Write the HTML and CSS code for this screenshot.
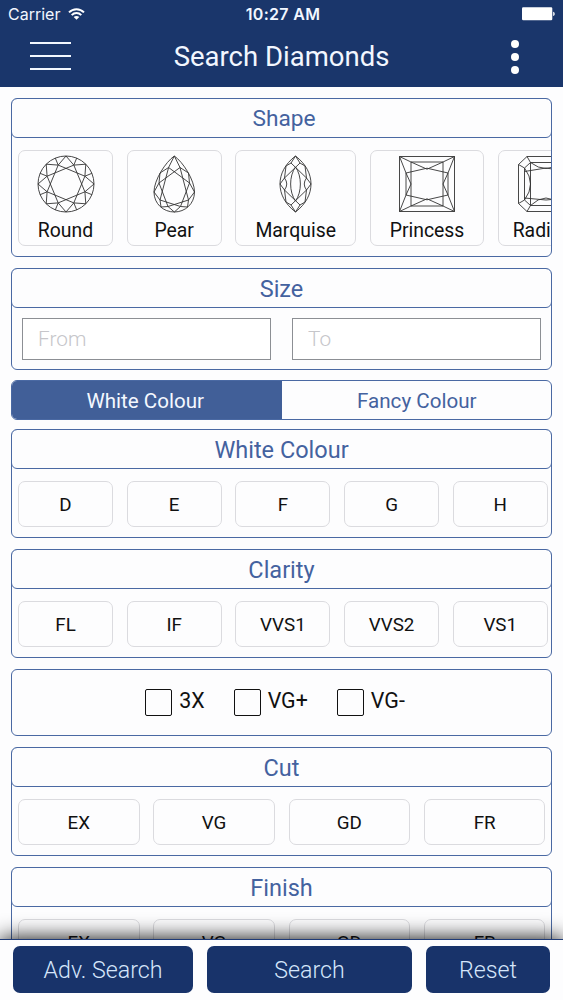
FILE: index.html
```html
<!DOCTYPE html>
<html lang="en">
<head>
    <meta charset="UTF-8">
    <meta name="viewport" content="width=device-width, initial-scale=1.0">
    <title>Search Diamonds</title>
    <link rel="stylesheet" href="styles.css">
</head>
<body>
    <header class="header">
        <div class="status">
            <div class="carrier">
                <span>Carrier</span>
                <svg width="17" height="12" viewBox="0 0 17 12" fill="none" stroke="#fff" stroke-width="2">
                    <path d="M1 4.4C5.2.1 11.8.1 16 4.4M3.7 7.1c2.7-2.7 6.9-2.7 9.6 0"/>
                    <path d="M8.5 11.8 5.7 9c1.6-1.5 4-1.5 5.6 0z" fill="#fff" stroke="none"/>
                </svg>
            </div>
            <span class="time">10:27 AM</span>
            <div class="battery">
                <svg width="33" height="14" viewBox="0 0 33 14" fill="#fff">
                    <rect x="0" y="0.3" width="30.3" height="13" rx="1.2"/>
                    <path d="M31.2 4.8c2 .6 2 3.6 0 4.2z"/>
                </svg>
            </div>
        </div>
        <div class="navbar">
            <button class="menu" aria-label="Menu"><span></span><span></span><span></span></button>
            <h1>Search Diamonds</h1>
            <button class="more" aria-label="More"><span></span><span></span><span></span></button>
        </div>
    </header>

    <main class="content">
        <section class="panel shape">
            <h2>Shape</h2>
            <div class="row">
                <button class="chip">
                    <svg width="58" height="58" viewBox="-1 -1 58 58">
                        <circle cx="28" cy="28" r="28"/>
                        <path d="M28 0 35.8 9.1 47.8 8.2 46.9 20.2 56 28 46.9 35.8 47.8 47.8 35.8 46.9 28 56 20.2 46.9 8.2 47.8 9.1 35.8 0 28 9.1 20.2 8.2 8.2 20.2 9.1z"/>
                        <path d="M35.8 9.1 46.9 35.8 20.2 46.9 9.1 20.2zM46.9 20.2 35.8 46.9 9.1 35.8 20.2 9.1z"/>
                        <path d="M35.8 9.1l2.9-7M46.9 20.2l7-2.9M46.9 35.8l7 2.9M35.8 46.9l2.9 7M20.2 46.9l-2.9 7M9.1 35.8l-7 2.9M9.1 20.2l-7-2.9M20.2 9.1l-2.9-7"/>
                    </svg>
                    Round
                </button>
                <button class="chip">
                    <svg width="43" height="58" viewBox="-1 -1 43 58">
                        <path d="M20.3 0C29 6 40.5 24 40.5 36 40.5 48 31 56 20.3 56S0 48 0 36C0 24 11.6 6 20.3 0z"/>
                        <path d="M20.3 0 26 11.5 34.5 17 35.5 27 40.5 36 34.5 44 33.5 51 26.5 50.5 20.3 56 14 50.5 7 51 6 44 0 36 5 27 6 17 14.6 11.5z"/>
                        <path d="M14.6 11.5 35.5 27 26.5 50.5 6 44zM26 11.5 34.5 44 14 50.5 5 27z"/>
                    </svg>
                    Pear
                </button>
                <button class="chip">
                    <svg width="33" height="58" viewBox="-1 -1 33 58">
                        <path d="M15.5 0C26 8 31 18 31 28S26 48 15.5 56C5 48 0 38 0 28S5 8 15.5 0z"/>
                        <path d="M15.5 0 20 7 25 10 26.5 22 31 28 26.5 34 25 46 20 49 15.5 56 11 49 6 46 4.5 34 0 28 4.5 22 6 10 11 7z"/>
                        <path d="M11 7 26.5 22Q22 28 26.5 34L11 49M20 7 4.5 22Q9 28 4.5 34L20 49"/>
                        <path d="M15.5 11C22 20 22 36 15.5 45 9 36 9 20 15.5 11z"/>
                    </svg>
                    Marquise
                </button>
                <button class="chip">
                    <svg width="58" height="58" viewBox="-1 -1 58 58">
                        <path d="M.5.5h55v55H.5zM12 6h32v44H12z"/>
                        <path d="M.5.5 12 6M55.5.5 44 6M.5 55.5 12 50M55.5 55.5 44 50"/>
                        <path d="M.5.5 7 17v22L.5 55.5M55.5.5 49 17v22l6.5 16.5"/>
                        <path d="M7 17l5 11-5 11M49 17l-5 11 5 11M12 6l16 7.2L44 6M7 17l21-4.8L49 17M12 50l16-7.2L44 50M7 39l21 4.8L49 39"/>
                    </svg>
                    Princess
                </button>
                <button class="chip radiant">
                    <svg width="58" height="58" viewBox="-1 -1 58 58">
                        <path d="M9 .5h38l8.5 8v39l-8.5 8H9l-8.5-8v-39z"/>
                        <path d="M12.500 6.5h31v43h-31zM6.5 12v32M49.5 12v32"/>
                        <path d="M9 .5l3.500 6M.5 8.5l6 3.500 6-5.500M.5 47.5l6-3.500 6 5.500M9 55.5l3.500-6M47 .5l-3.500 6M55.5 8.5l-6 3.500-6-5.500M55.5 47.5l-6-3.500-6 5.500M47 55.5l-3.500-6"/>
                        <path d="M6.5 12q12 16 0 32M49.5 12q-12 16 0 32M12.5 6.5q15.5 12 31 0M12.5 49.5q15.5-15 31 0M6.5 15.5 28 12l21.500 3.500M6.5 42 28 44l21.500-2"/>
                    </svg>
                    Radiant
                </button>
            </div>
        </section>

        <section class="panel size">
            <h2>Size</h2>
            <div class="fields">
                <input type="text" placeholder="From">
                <input type="text" placeholder="To">
            </div>
        </section>

        <div class="tabs">
            <button class="tab active">White Colour</button>
            <button class="tab">Fancy Colour</button>
        </div>

        <section class="panel">
            <h2>White Colour</h2>
            <div class="row">
                <button class="chip">D</button>
                <button class="chip">E</button>
                <button class="chip">F</button>
                <button class="chip">G</button>
                <button class="chip">H</button>
            </div>
        </section>

        <section class="panel">
            <h2>Clarity</h2>
            <div class="row">
                <button class="chip">FL</button>
                <button class="chip">IF</button>
                <button class="chip">VVS1</button>
                <button class="chip">VVS2</button>
                <button class="chip">VS1</button>
            </div>
        </section>

        <section class="panel checks">
            <label><input type="checkbox">3X</label>
            <label><input type="checkbox">VG+</label>
            <label><input type="checkbox">VG-</label>
        </section>

        <section class="panel wide">
            <h2>Cut</h2>
            <div class="row">
                <button class="chip">EX</button>
                <button class="chip">VG</button>
                <button class="chip">GD</button>
                <button class="chip">FR</button>
            </div>
        </section>

        <section class="panel wide">
            <h2>Finish</h2>
            <div class="row">
                <button class="chip">EX</button>
                <button class="chip">VG</button>
                <button class="chip">GD</button>
                <button class="chip">FR</button>
            </div>
        </section>
    </main>

    <footer class="footer">
        <button>Adv. Search</button>
        <button>Search</button>
        <button>Reset</button>
    </footer>
</body>
</html>
```

FILE: styles.css
```css
* {
    box-sizing: border-box;
}
body {
    margin: 0;
    height: 100vh;
    display: flex;
    flex-direction: column;
    overflow: hidden;
    background: #fdfdfe;
    font-family: Roboto, sans-serif;
}
button {
    font-family: inherit;
    padding: 0;
    margin: 0;
    border: none;
    background: none;
    cursor: pointer;
}

/* header */
.header {
    height: 87px;
    flex: none;
    background: #1a366b;
    color: #f2f7ff;
}
.status {
    height: 28px;
    padding: 0 8px;
    display: grid;
    grid-template-columns: 1fr auto 1fr;
    align-items: center;
    font-family: Inter, sans-serif;
    font-size: 16px;
}
.carrier {
    display: flex;
    align-items: center;
    gap: 8px;
}
.time {
    padding-left: 3px;
    font-size: 16px;
    font-weight: 600;
    letter-spacing: 0.3px;
}
.battery {
    display: flex;
    justify-content: flex-end;
}
.navbar {
    height: 57px;
    padding: 0 44px 0 30px;
    display: flex;
    align-items: center;
    justify-content: space-between;
}
.navbar h1 {
    margin: 0 19px 0 0;
    flex: 1;
    text-align: center;
    font-size: 27.5px;
    font-weight: 400;
    line-height: 32px;
}
.menu {
    width: 41px;
    display: flex;
    flex-direction: column;
    gap: 11px;
    padding-bottom: 1px;
}
.menu span {
    height: 2px;
    background: #f2f7ff;
}
.more {
    width: 8px;
    display: flex;
    flex-direction: column;
    gap: 5px;
}
.more span {
    height: 8px;
    border-radius: 50%;
    background: #fff;
}

/* panels */
.content {
    flex: 1;
    min-height: 0;
    overflow: hidden;
    padding: 11px 11px 0;
}
.panel {
    height: 109px;
    margin-bottom: 11px;
    border: 1px solid #4a69a3;
    border-radius: 6px;
    overflow: hidden;
}
.panel h2 {
    height: 40px;
    margin: -1px -1px 0;
    border: 1px solid #4a69a3;
    border-radius: 6px;
    color: #44629f;
    font-size: 23.5px;
    font-weight: 400;
    line-height: 40px;
    text-align: center;
}
.row {
    display: flex;
    gap: 13.7px;
    padding: 12px 6px;
}
.chip {
    flex: none;
    width: 95px;
    height: 46px;
    padding-top: 1px;
    border: 1px solid #dbdbdf;
    border-radius: 7px;
    color: #111;
    font-size: 18.8px;
}
.wide .chip {
    width: 121.6px;
}
.shape {
    height: 159px;
}
.shape h2 {
    padding-left: 5px;
    font-size: 22.7px;
}
.shape .chip {
    width: auto;
    min-width: 95px;
    height: 96px;
    padding: 4px 19px 3px;
    display: flex;
    flex-direction: column;
    align-items: center;
    justify-content: space-between;
    font-size: 19.4px;
}
.shape .chip:first-child {
    padding-left: 17px;
    padding-right: 17px;
}
.shape .radiant {
    padding-left: 13px;
    padding-right: 13px;
}
.chip svg {
    fill: none;
    stroke: #333;
    stroke-width: 0.9;
}
.size {
    height: 102px;
    margin-bottom: 10px;
}
.fields {
    display: flex;
    gap: 21px;
    padding: 10px;
}
.fields input {
    flex: 1;
    min-width: 0;
    height: 42px;
    padding: 0 15px;
    border: 1px solid #8c8f94;
    background: #fff;
    font-family: inherit;
    font-size: 20.8px;
    font-weight: 300;
}
.fields input::placeholder {
    color: #c6c6ca;
}

/* colour switch */
.tabs {
    display: flex;
    height: 40px;
    margin-bottom: 9px;
    border: 1px solid #4a69a3;
    border-radius: 6px;
    overflow: hidden;
}
.tab {
    flex: none;
    width: 50%;
    padding: 1px 0 0 1px;
    color: #44629f;
    font-size: 20.6px;
}
.tab.active {
    padding: 1px 3px 0 0;
    background: #415f98;
    color: #f4f8ff;
}

/* grade checkboxes */
.checks {
    height: 67px;
    display: flex;
    justify-content: center;
    align-items: center;
    gap: 29px;
    padding: 0 13px 4px 0;
}
.checks label {
    display: flex;
    align-items: center;
    gap: 7px;
    color: #111;
    font-size: 21.4px;
    line-height: 30px;
}
.checks input {
    appearance: none;
    width: 27px;
    height: 27px;
    margin: 4px 0 0;
    border: 1px solid #111;
    border-radius: 2px;
}

/* bottom bar */
.footer {
    height: 61px;
    flex: none;
    display: grid;
    grid-template-columns: 180px 205px 124px;
    gap: 14px;
    padding: 6px 13px;
    border-top: 1px solid #1f3b77;
    background: #fdfdfe;
    box-shadow: 0 0 22px #000;
}
.footer button {
    height: 47px;
    padding-top: 1px;
    border-radius: 7px;
    background: #18336a;
    color: #d5e6fb;
    font-size: 23.2px;
    font-weight: 300;
}
```
